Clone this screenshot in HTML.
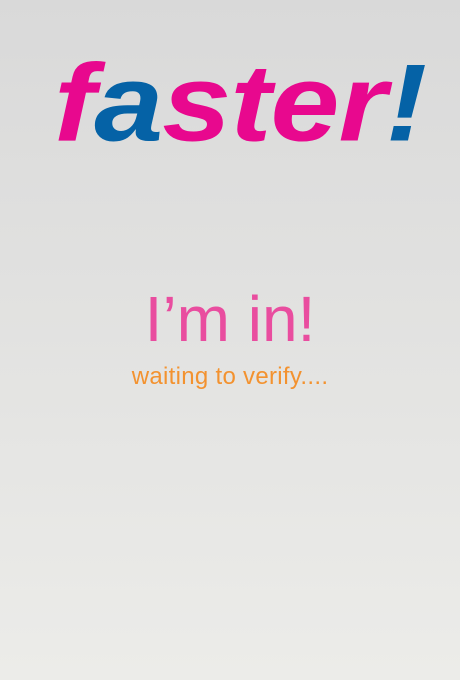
<!DOCTYPE html>
<html><head><style>
html,body{margin:0;padding:0}
body{width:460px;height:680px;overflow:hidden;position:relative;background:linear-gradient(#d9d9d9,#ecece9);font-family:"Liberation Sans",sans-serif}
.logo{position:absolute;left:54px;top:18px;font-size:124px;font-weight:bold;font-style:italic;line-height:160px;white-space:nowrap;letter-spacing:-1px;transform:scaleY(0.88);transform-origin:0 128px}
.p{color:#e8088e}.b{color:#0562a6}
.t1{position:absolute;left:0;width:460px;text-align:center;top:282px;font-size:64px;line-height:74px;color:#e94d9f}
.t2{position:absolute;left:0;width:460px;text-align:center;top:363px;font-size:24px;line-height:28px;color:#f3922f;letter-spacing:0.3px}
</style></head><body>
<div class="logo"><span class="p">f</span><span class="b">a</span><span class="p">ster</span><span class="b">!</span></div>
<div class="t1">I’m in!</div>
<div class="t2">waiting to verify....</div>
</body></html>
